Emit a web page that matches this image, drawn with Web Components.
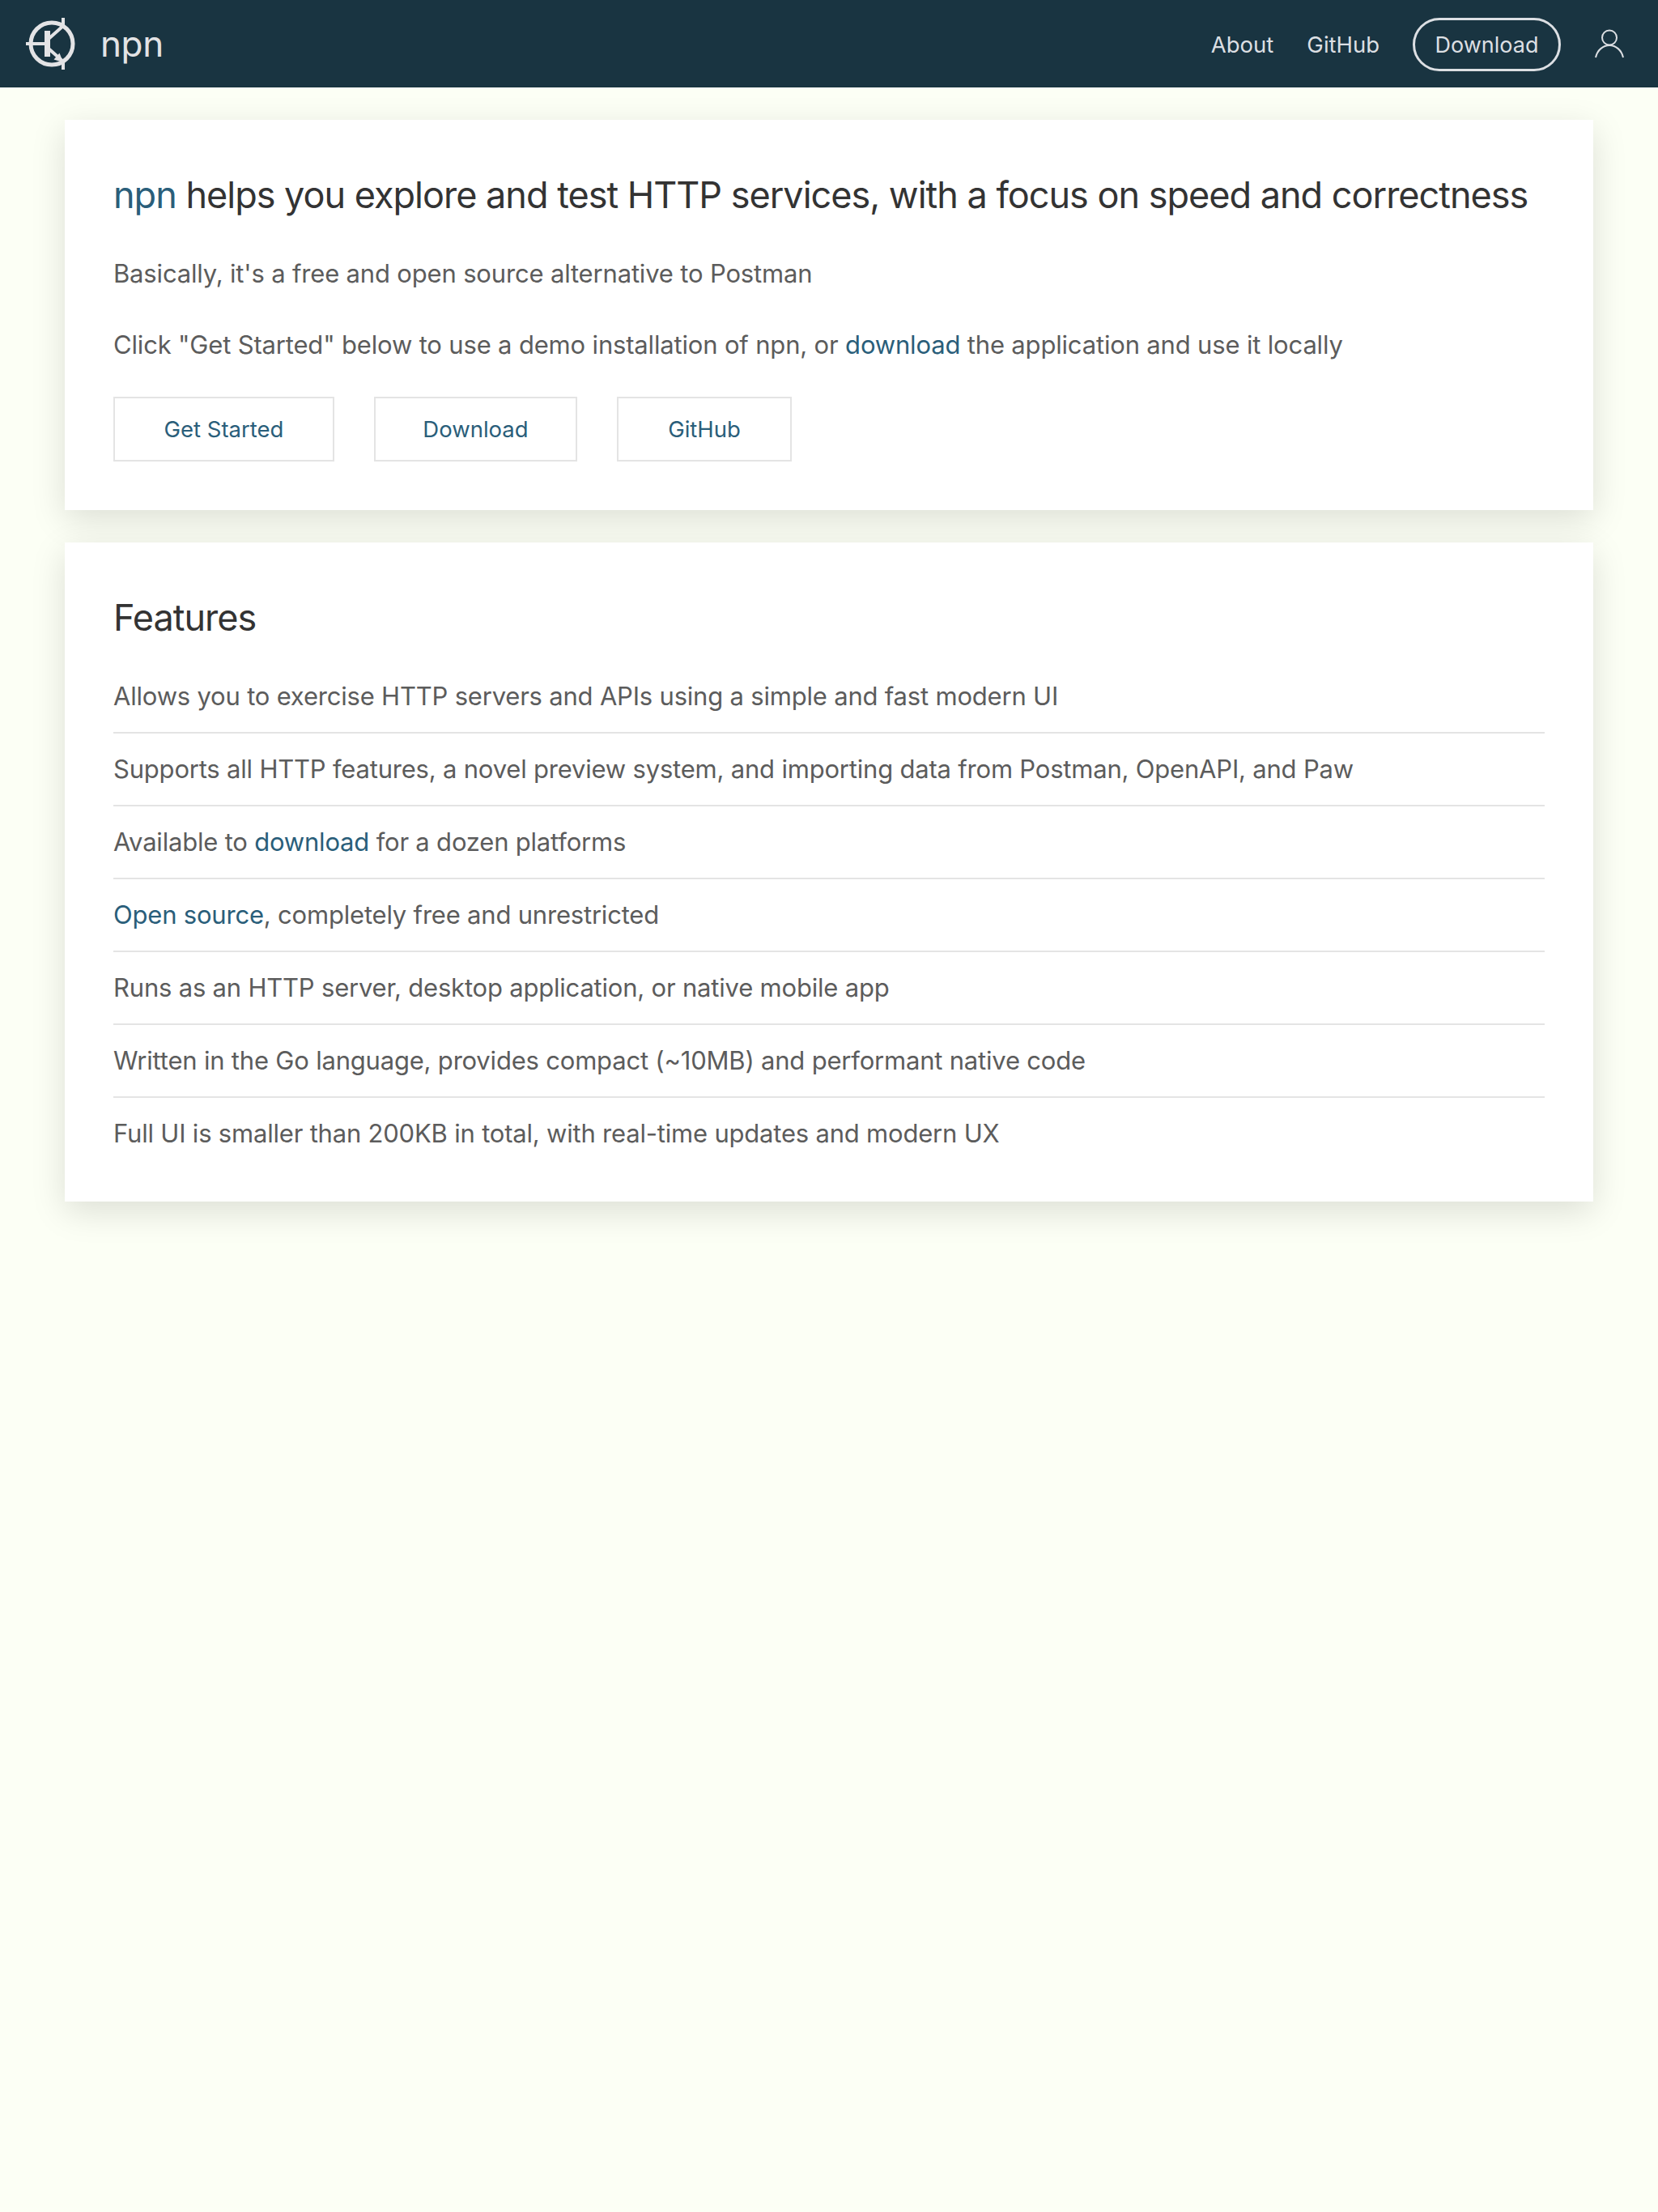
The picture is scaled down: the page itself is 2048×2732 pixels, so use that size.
<!DOCTYPE html>
<html>
<head>
<meta charset="utf-8">
<title>npn</title>
<style>
html, body { margin: 0; padding: 0; }
body { background: #fcfff5; min-height: 2732px; font-family: Inter, "Liberation Sans", sans-serif; }
npn-title a, npn-text a, npn-row a { color: #2a5e7a; }
</style>
</head>
<body>
<npn-nav></npn-nav>
<npn-main>
	<npn-card>
		<npn-title><a>npn</a> helps you explore and test HTTP services, with a focus on speed and correctness</npn-title>
		<npn-text>Basically, it's a free and open source alternative to Postman</npn-text>
		<npn-text>Click "Get Started" below to use a demo installation of npn, or <a>download</a> the application and use it locally</npn-text>
		<npn-actions>
			<npn-button style="width: 273px">Get Started</npn-button>
			<npn-button style="width: 251px">Download</npn-button>
			<npn-button style="width: 216px">GitHub</npn-button>
		</npn-actions>
	</npn-card>
	<npn-card>
		<npn-title>Features</npn-title>
		<npn-row>Allows you to exercise HTTP servers and APIs using a simple and fast modern UI</npn-row>
		<npn-row>Supports all HTTP features, a novel preview system, and importing data from Postman, OpenAPI, and Paw</npn-row>
		<npn-row>Available to <a>download</a> for a dozen platforms</npn-row>
		<npn-row><a>Open source</a>, completely free and unrestricted</npn-row>
		<npn-row>Runs as an HTTP server, desktop application, or native mobile app</npn-row>
		<npn-row>Written in the Go language, provides compact (~10MB) and performant native code</npn-row>
		<npn-row>Full UI is smaller than 200KB in total, with real-time updates and modern UX</npn-row>
	</npn-card>
</npn-main>
<script>
class Base extends HTMLElement {
	constructor() {
		super();
		this.attachShadow({ mode: "open" });
	}
	connectedCallback() {
		this.render();
	}
}

class NpnNav extends Base {
	render() {
		this.shadowRoot.innerHTML = `
			<style>
				:host { display: flex; align-items: center; height: 108px; background: #193441; color: #dcdfe3; padding: 0 42px 0 30px; box-sizing: border-box; }
				.logo { width: 66px; height: 66px; display: block; }
				.name { font-size: 44px; margin-left: 28px; flex: 1; letter-spacing: -0.4px; color: #e3e3e5; }
				.link { font-size: 27.500px; margin: 2px 41px 0 0; }
				.pill { font-size: 27px; border: 3.500px solid #dcdfe3; border-radius: 33px; height: 66px; box-sizing: border-box; padding: 0 24.500px; display: flex; align-items: center; margin: 2px 42px 0 0; }
				.user { width: 36px; height: 36px; display: block; }
			</style>
			<svg class="logo" viewBox="30 21 66 66" fill="none" stroke="#e3e3e5">
				<circle cx="64" cy="54" r="26" stroke-width="5"/>
				<path d="M32 54H57" stroke-width="4"/>
				<path d="M58.5 38V70" stroke-width="7"/>
				<path d="M60 48L78 32M78 22V33" stroke-width="4"/>
				<path d="M60 60L78 76M78 75V86" stroke-width="4"/>
				<path d="M78 77L66.500 73.500L73.500 65.500Z" fill="#e3e3e5" stroke="none"/>
			</svg>
			<span class="name">npn</span>
			<span class="link">About</span>
			<span class="link">GitHub</span>
			<span class="pill">Download</span>
			<svg class="user" viewBox="0 0 36 36" fill="none" stroke="#dcdfe3" stroke-width="2">
				<circle cx="18" cy="10.500" r="9"/>
				<path d="M1 35C3 26 10 20 18 20S33 26 35 35"/>
			</svg>
		`;
	}
}

class NpnMain extends Base {
	render() {
		this.shadowRoot.innerHTML = `
			<style>
				:host { display: flex; flex-direction: column; gap: 40px; padding: 40px 80px; }
			</style>
			<slot></slot>
		`;
	}
}

class NpnCard extends Base {
	render() {
		this.shadowRoot.innerHTML = `
			<style>
				:host { display: block; background: #fff; padding: 60px; box-shadow: 0 12px 40px rgba(0, 0, 0, 0.13); }
			</style>
			<slot></slot>
		`;
	}
}

class NpnTitle extends Base {
	render() {
		this.shadowRoot.innerHTML = `
			<style>
				:host { display: block; font-size: 45px; line-height: 66px; color: #333; letter-spacing: -1px; margin-bottom: 40px; }
			</style>
			<slot></slot>
		`;
	}
}

class NpnText extends Base {
	render() {
		this.shadowRoot.innerHTML = `
			<style>
				:host { display: block; font-size: 31px; letter-spacing: -0.17px; line-height: 48px; color: #5c5c5c; margin-bottom: 40px; }
			</style>
			<slot></slot>
		`;
	}
}

class NpnActions extends Base {
	render() {
		this.shadowRoot.innerHTML = `
			<style>
				:host { display: flex; gap: 49px; }
			</style>
			<slot></slot>
		`;
	}
}

class NpnButton extends Base {
	render() {
		this.shadowRoot.innerHTML = `
			<style>
				:host { display: flex; align-items: center; justify-content: center; height: 80px; box-sizing: border-box; border: 2px solid #e4e4e4; font-size: 27.500px; color: #2a5e7a; }
			</style>
			<slot></slot>
		`;
	}
}

class NpnRow extends Base {
	render() {
		this.shadowRoot.innerHTML = `
			<style>
				:host { display: block; font-size: 31px; letter-spacing: -0.2px; line-height: 48px; padding: 20px 0; color: #5c5c5c; border-bottom: 2px solid #e4e4e4; }
				:host(:first-of-type) { padding-top: 0; }
				:host(:last-child) { border-bottom: 0; padding-bottom: 0; }
			</style>
			<slot></slot>
		`;
	}
}

customElements.define("npn-nav", NpnNav);
customElements.define("npn-main", NpnMain);
customElements.define("npn-card", NpnCard);
customElements.define("npn-title", NpnTitle);
customElements.define("npn-text", NpnText);
customElements.define("npn-actions", NpnActions);
customElements.define("npn-button", NpnButton);
customElements.define("npn-row", NpnRow);
</script>
</body>
</html>
